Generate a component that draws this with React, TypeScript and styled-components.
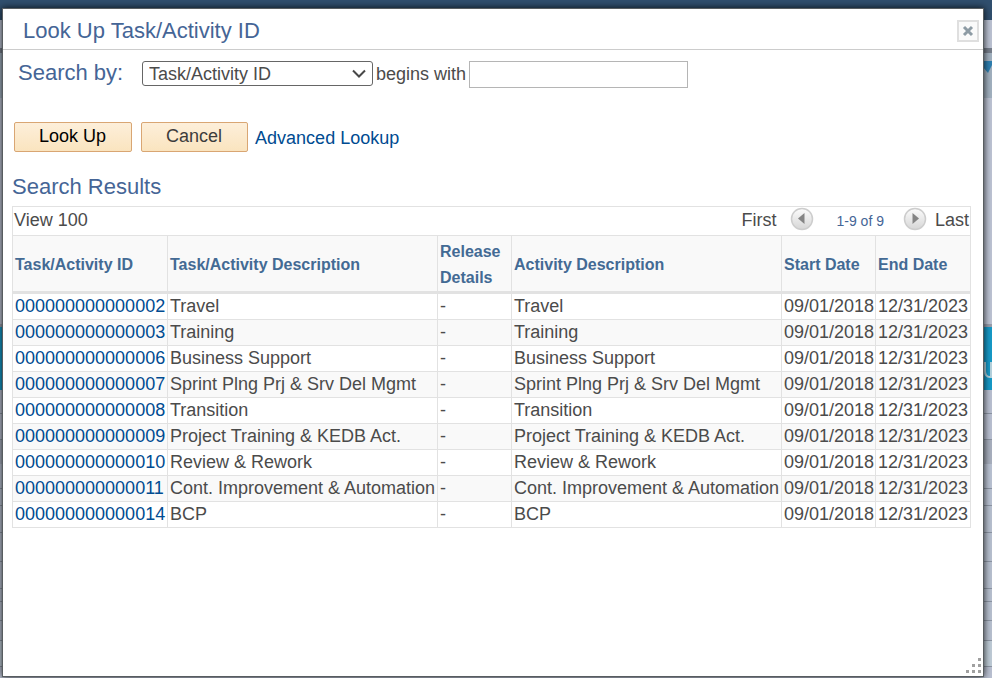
import React from "react";
import styled, { createGlobalStyle } from "styled-components";

const GlobalStyle = createGlobalStyle`
  * { box-sizing: border-box; }
  body {
    margin: 0;
    font-family: "Liberation Sans", Arial, sans-serif;
    font-size: 18px;
    color: #4b4b4b;
  }
  button, input, select { font: inherit; }
`;

const Page = styled.div`
  display: grid;
  min-height: 100vh;
  overflow: hidden;
`;

const Backdrop = styled.div`
  grid-area: 1 / 1;
  display: flex;
  flex-direction: column;
  background: #bac1d2;
`;

const Band = styled.div<{ $height: number; $color: string; $line?: boolean }>`
  flex: none;
  display: flex;
  justify-content: flex-end;
  height: ${(p) => p.$height}px;
  background: ${(p) => p.$color};
  border-bottom: ${(p) => (p.$line ? "1px solid #8d96a4" : "none")};
`;

const Dialog = styled.section`
  grid-area: 1 / 1;
  z-index: 1;
  display: flex;
  flex-direction: column;
  margin: 8px 8px 1px 2px;
  border: 1px solid #585d60;
  background: #fff;
  box-shadow: 0 0 7px rgba(0, 0, 0, 0.85);
`;

const TitleBar = styled.header`
  display: flex;
  align-items: center;
  justify-content: space-between;
  height: 41px;
  padding: 4px 4px 0 20px;
  border-bottom: 1px solid #ccc;
`;

const Title = styled.h1`
  margin: 0;
  font-size: 22px;
  line-height: 26px;
  font-weight: normal;
  color: #456596;
`;

const CloseButton = styled.button`
  display: grid;
  place-items: center;
  width: 22px;
  height: 22px;
  padding: 0;
  border: 2px solid #dfdfdf;
  background: #fafafa;
`;

const Body = styled.main`
  flex: 1;
  display: flex;
  flex-direction: column;
  padding: 11px 12px 0 9px;
`;

const SearchRow = styled.form`
  display: flex;
  align-items: flex-start;
  padding-left: 6px;
`;

const SearchLabel = styled.label`
  width: 124px;
  font-size: 22px;
  line-height: 24px;
  color: #456596;
`;

const SelectWrap = styled.div`
  display: grid;
  align-items: center;
  width: 231px;
`;

const FieldSelect = styled.select`
  grid-area: 1 / 1;
  height: 25px;
  padding: 0 28px 0 6px;
  border: 1px solid #666;
  border-radius: 3px;
  background: #fff;
  color: #4b4b4b;
  appearance: none;
`;

const Chevron = styled.svg`
  grid-area: 1 / 1;
  justify-self: end;
  margin-right: 7px;
  pointer-events: none;
`;

const Operator = styled.label`
  padding: 0 3px;
  line-height: 26px;
`;

const SearchInput = styled.input`
  width: 219px;
  height: 27px;
  padding: 0 4px;
  border: 1px solid #b5b5b5;
  color: #4b4b4b;
`;

const Actions = styled.div`
  display: flex;
  align-items: center;
  gap: 9px;
  margin-top: 34px;
  padding-left: 2px;
`;

const ActionButton = styled.button<{ $primary?: boolean }>`
  height: 30px;
  padding: 0 25px 1px 24px;
  border: 1px solid #d9a673;
  border-radius: 2px;
  background: linear-gradient(#fdefda, #fae4bf);
  color: ${(p) => (p.$primary ? "#000" : "#3c3c3c")};
`;

const TextLink = styled.a`
  color: #004b91;
  text-decoration: none;
`;

const AdvancedLink = styled(TextLink)`
  margin: 2px 0 0 -2px;
`;

const ResultsTitle = styled.h2`
  margin: 22px 0 7px;
  font-size: 22px;
  line-height: 25px;
  font-weight: normal;
  color: #456596;
`;

const Results = styled.div`
  border: 1px solid #e2e2e2;
  border-width: 1px 0 0 1px;
`;

const ResultsNav = styled.div`
  display: flex;
  align-items: center;
  height: 28px;
  padding: 0 1px;
  border-right: 1px solid #e2e2e2;
`;

const NavText = styled.span`
  line-height: 25px;
  padding-bottom: 2px;
`;

const ViewLabel = styled(NavText)`
  flex: 1;
`;

const Pager = styled.div`
  display: flex;
  align-items: center;
  gap: 15px;
  margin: 0 8px 4px 14px;
`;

const PageButton = styled.button`
  display: block;
  width: 24px;
  height: 24px;
  padding: 0;
  border: 0;
  background: none;
`;

const Range = styled.span`
  padding: 4px 4px 0 7px;
  font-size: 14px;
  color: #456596;
`;

const Grid = styled.table`
  width: 100%;
  border-collapse: separate;
  border-spacing: 0;
  border-top: 1px solid #e2e2e2;
`;

const Column = styled.col<{ $width: number }>`
  width: ${(p) => p.$width}px;
`;

const HeadCell = styled.th`
  padding: 3px 2px 0;
  border-right: 1px solid #e2e2e2;
  border-bottom: 3px solid #e2e2e2;
  background: #f9f9f9;
  color: #436a94;
  font-size: 16px;
  line-height: 26px;
  text-align: left;
`;

const Row = styled.tr`
  &:nth-child(even) { background: #f9f9f9; }
`;

const Cell = styled.td`
  padding: 0 0 0 2px;
  border-right: 1px solid #e2e2e2;
  border-bottom: 1px solid #e2e2e2;
  line-height: 25px;
  white-space: nowrap;
`;

const ResizeCorner = styled.div`
  display: flex;
  justify-content: flex-end;
  height: 19px;
`;

const bands = [
  { height: 20, color: "#304f6e" },
  { height: 28, color: "#bcc3d3" },
  { height: 5, color: "#777f8c" },
  { height: 45, color: "#a2b1c0", mark: "arrow" },
  { height: 226, color: "#bdc4d4" },
  { height: 3, color: "#999fad" },
  { height: 63, color: "#169ac8", mark: "hook" },
  { height: 24, color: "#bac1d2", line: true },
  { height: 26, color: "#bac1d2", line: true },
  { height: 24, color: "#a9b0bf" },
  { height: 25, color: "#bac3d3", line: true },
  { height: 17, color: "#bac3d3", line: true },
  { height: 27, color: "#b8c1d0", line: true },
  { height: 29, color: "#b8c1d0", line: true },
  { height: 27, color: "#b8c1d0", line: true },
  { height: 13, color: "#b8c1d0", line: true },
  { height: 19, color: "#b8c1d0", line: true },
  { height: 20, color: "#b8c1d0", line: true },
  { height: 26, color: "#bfccd7", line: true },
];

const columns = [
  { label: "Task/Activity ID", width: 155 },
  { label: "Task/Activity Description", width: 270 },
  { label: "Release Details", width: 74 },
  { label: "Activity Description", width: 270 },
  { label: "Start Date", width: 94 },
  { label: "End Date", width: 95 },
];

const tasks = [
  ["000000000000002", "Travel"],
  ["000000000000003", "Training"],
  ["000000000000006", "Business Support"],
  ["000000000000007", "Sprint Plng Prj & Srv Del Mgmt"],
  ["000000000000008", "Transition"],
  ["000000000000009", "Project Training & KEDB Act."],
  ["000000000000010", "Review & Rework"],
  ["000000000000011", "Cont. Improvement & Automation"],
  ["000000000000014", "BCP"],
];

function PageIcon({ id, path }: { id: string; path: string }) {
  return (
    <svg width="24" height="24" viewBox="0 0 24 24" aria-hidden="true">
      <defs>
        <linearGradient id={id} x1="0" y1="0" x2="0" y2="1">
          <stop offset="0" stopColor="#fcfcfc" />
          <stop offset="1" stopColor="#d6d6d6" />
        </linearGradient>
      </defs>
      <circle cx="12" cy="12" r="10.5" fill={`url(#${id})`} stroke="#cdcdcd" strokeWidth="1.5" />
      <path d={path} fill="#858585" />
    </svg>
  );
}

export default function App() {
  return (
    <>
      <GlobalStyle />
      <Page>
        <Backdrop aria-hidden="true">
          {bands.map((b, i) => (
            <Band key={i} $height={b.height} $color={b.color} $line={b.line}>
              {b.mark === "arrow" && (
                <svg width="9" height="45" viewBox="0 0 9 45">
                  <path d="M0 8h9v4L5 20 0 14z" fill="#2e7fb0" />
                </svg>
              )}
              {b.mark === "hook" && (
                <svg width="9" height="63" viewBox="0 0 9 63">
                  <path d="M2 35v9q0 6 5 6M8 35v16" fill="none" stroke="#b5d3df" strokeWidth="2" />
                </svg>
              )}
            </Band>
          ))}
        </Backdrop>
        <Dialog role="dialog" aria-labelledby="dialog-title">
          <TitleBar>
            <Title id="dialog-title">Look Up Task/Activity ID</Title>
            <CloseButton type="button" aria-label="Close">
              <svg width="12" height="12" viewBox="0 0 12 12" aria-hidden="true">
                <path d="M2 2l8 8M10 2l-8 8" stroke="#8d9ba4" strokeWidth="3" />
              </svg>
            </CloseButton>
          </TitleBar>
          <Body>
            <SearchRow onSubmit={(e) => e.preventDefault()}>
              <SearchLabel htmlFor="search-field">Search by:</SearchLabel>
              <SelectWrap>
                <FieldSelect id="search-field" defaultValue="id">
                  <option value="id">Task/Activity ID</option>
                  <option value="description">Activity Description</option>
                </FieldSelect>
                <Chevron width="14" height="10" viewBox="0 0 14 10" aria-hidden="true">
                  <path d="M1 1.5l6 6 6-6" fill="none" stroke="#484848" strokeWidth="2" />
                </Chevron>
              </SelectWrap>
              <Operator htmlFor="search-value">begins with</Operator>
              <SearchInput id="search-value" type="text" />
            </SearchRow>
            <Actions>
              <ActionButton type="button" $primary>Look Up</ActionButton>
              <ActionButton type="button">Cancel</ActionButton>
              <AdvancedLink href="#advanced">Advanced Lookup</AdvancedLink>
            </Actions>
            <ResultsTitle>Search Results</ResultsTitle>
            <Results>
              <ResultsNav>
                <ViewLabel>View 100</ViewLabel>
                <NavText>First</NavText>
                <Pager>
                  <PageButton type="button" aria-label="Previous">
                    <PageIcon id="previous-face" path="M14.5 6v11L8 11.5z" />
                  </PageButton>
                  <Range>1-9 of 9</Range>
                  <PageButton type="button" aria-label="Next">
                    <PageIcon id="next-face" path="M9.5 6v11l6.500-5.500z" />
                  </PageButton>
                </Pager>
                <NavText>Last</NavText>
              </ResultsNav>
              <Grid>
                <colgroup>
                  {columns.map((c) => <Column key={c.label} $width={c.width} />)}
                </colgroup>
                <thead>
                  <tr>
                    {columns.map((c) => <HeadCell key={c.label} scope="col">{c.label}</HeadCell>)}
                  </tr>
                </thead>
                <tbody>
                  {tasks.map(([id, name]) => (
                    <Row key={id}>
                      <Cell><TextLink href={`#${id}`}>{id}</TextLink></Cell>
                      <Cell>{name}</Cell>
                      <Cell>-</Cell>
                      <Cell>{name}</Cell>
                      <Cell>09/01/2018</Cell>
                      <Cell>12/31/2023</Cell>
                    </Row>
                  ))}
                </tbody>
              </Grid>
            </Results>
          </Body>
          <ResizeCorner>
            <svg width="18" height="18" viewBox="0 0 18 18" aria-hidden="true">
              <path
                d="M13 1h3v3h-3zM7 7h3v3H7zM13 7h3v3h-3zM1 13h3v3H1zM7 13h3v3H7zM13 13h3v3h-3z"
                fill="#a0a0a0"
              />
            </svg>
          </ResizeCorner>
        </Dialog>
      </Page>
    </>
  );
}
